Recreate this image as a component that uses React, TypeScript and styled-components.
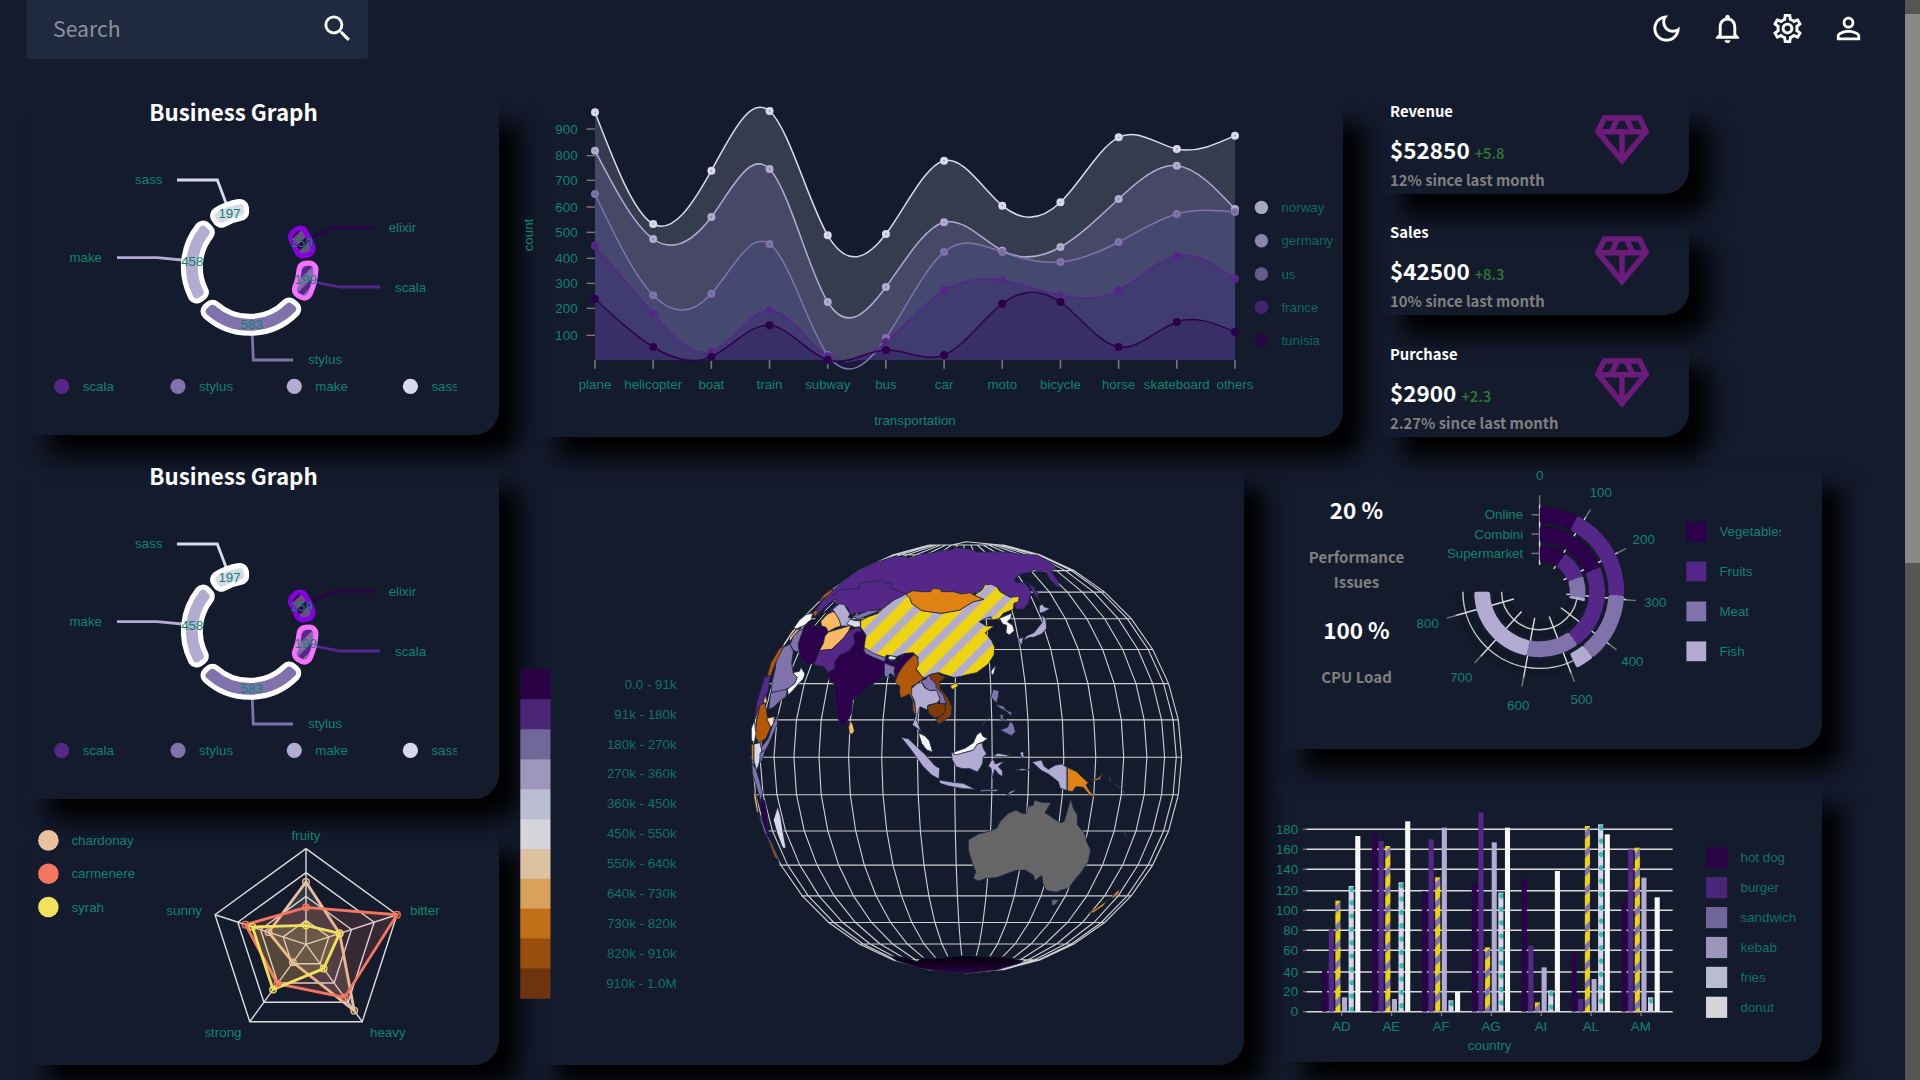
import React from "react";
import styled, { createGlobalStyle } from "styled-components";
import {
  MdSearch,
  MdOutlineDarkMode,
  MdNotificationsNone,
  MdOutlineSettings,
  MdPersonOutline,
  MdOutlineDiamond,
} from "react-icons/md";

const UI_FONT = '"Noto Sans CJK SC", "Noto Sans", sans-serif';
const CHART_FONT = '"Liberation Sans", Arial, sans-serif';
const TEAL = "#0e846d";

const GlobalStyle = createGlobalStyle`
  html, body { margin: 0; padding: 0; background: #141b2d; }
  body { height: 1080px; overflow: hidden; font-family: ${UI_FONT}; color: #fff; }
  *, *::before, *::after { box-sizing: border-box; }
`;

/* ---------- layout ---------- */

const Page = styled.div`
  display: flex;
  width: 1920px;
  height: 1080px;
  overflow: hidden;
  background: #141b2d;
`;
const Content = styled.main`
  width: 1905px;
  height: 1080px;
  overflow: hidden;
`;
const ScrollTrack = styled.div`
  width: 15px;
  height: 1080px;
  padding-top: 14px;
  background: #555;
`;
const ScrollThumb = styled.div`
  height: 549px;
  background: #888;
`;
const TopBar = styled.header`
  display: flex;
  justify-content: space-between;
  height: 103px;
  padding: 0 39px 0 27px;
`;
const SearchBox = styled.div`
  display: flex;
  align-items: center;
  justify-content: space-between;
  width: 341px;
  height: 59px;
  padding: 0 13px 3px 26px;
  border-radius: 0 0 4px 4px;
  background: #1f2a40;
  font-size: 35px;
`;
const SearchText = styled.span`
  font-size: 21.2px;
  line-height: 30px;
  color: #8c919b;
`;
const IconRow = styled.nav`
  display: flex;
  gap: 25.6px;
  height: 57px;
  align-items: center;
  font-size: 35px;
`;
const Board = styled.div`
  display: flex;
  gap: 38px;
  padding-left: 27px;
`;
const Column = styled.div<{ $w: number; $gap: number }>`
  display: flex;
  flex-direction: column;
  width: ${(p) => p.$w}px;
  gap: ${(p) => p.$gap}px;
`;
const Row = styled.div`
  display: flex;
  gap: 38px;
`;
const Card = styled.section<{ $w: number; $h: number }>`
  flex: none;
  display: flex;
  width: ${(p) => p.$w}px;
  height: ${(p) => p.$h}px;
  border-radius: 0 0 25px 0;
  box-shadow: 21px 21px 23px #000;
`;
const PieCard = styled(Card)`
  flex-direction: column;
`;
const PieTitle = styled.h2`
  margin: 0;
  width: 413px;
  height: 22px;
  font-size: 22.3px;
  line-height: 17.6px;
  font-weight: 700;
  text-align: center;
`;
const Chart = styled.svg`
  display: block;
  flex: none;
  overflow: visible;
  font-family: ${CHART_FONT};
  font-size: 13.33px;
`;
const ClippedChart = styled(Chart)`
  overflow: hidden;
`;
const RadialChart = styled(ClippedChart)`
  margin-left: -24px;
`;

/* ---------- stat cards ---------- */

const StatCard = styled(Card)`
  justify-content: space-between;
  padding: 0 34px 0 9px;
`;
const StatBody = styled.div`
  display: flex;
  flex-direction: column;
`;
const StatName = styled.div`
  height: 26px;
  font-size: 14.8px;
  line-height: 16px;
  font-weight: 700;
`;
const StatValue = styled.div`
  display: flex;
  align-items: baseline;
  gap: 5px;
  height: 37px;
  font-size: 22.5px;
  line-height: 41px;
  font-weight: 700;
`;
const StatDelta = styled.span`
  font-size: 14.8px;
  font-weight: 500;
  color: #2e7d32;
`;
const StatNote = styled.div`
  font-size: 14.85px;
  line-height: 28px;
  font-weight: 700;
  color: #808080;
  white-space: nowrap;
`;
const Gem = styled(MdOutlineDiamond)`
  margin-top: 4px;
  font-size: 66px;
  color: #6c1b7b;
`;

/* ---------- performance ---------- */

const PerfList = styled.div`
  flex: none;
  width: 149px;
  padding-top: 28px;
  text-align: center;
  font-weight: 700;
`;
const PerfValue = styled.div`
  height: 49px;
  font-size: 22.5px;
  line-height: 29px;
`;
const PerfLabel = styled.div<{ $h: number }>`
  height: ${(p) => p.$h}px;
  padding: 0 24px;
  font-size: 15px;
  line-height: 25.4px;
  color: #808080;
`;

/* ---------- pie ---------- */

const PX = 249.7;
const PY = 267;
const rad = (d: number) => ((d - 90) * Math.PI) / 180;
const at = (cx: number, cy: number, r: number, d: number) =>
  `${(cx + r * Math.cos(rad(d))).toFixed(2)},${(cy + r * Math.sin(rad(d))).toFixed(2)}`;

/* Ring sector inset by c on every side, so a round-joined stroke gives it soft corners. */
function sector(cx: number, cy: number, ri: number, ro: number, a: number, b: number, c: number) {
  const i = ri + c;
  const o = ro - c;
  const di = (Math.asin(c / i) * 180) / Math.PI;
  const dOut = (Math.asin(c / o) * 180) / Math.PI;
  const large = b - a > 180 ? 1 : 0;
  return `M${at(cx, cy, o, a + dOut)}A${o},${o} 0 ${large} 1 ${at(cx, cy, o, b - dOut)}L${at(cx, cy, i, b - di)}A${i},${i} 0 ${large} 0 ${at(cx, cy, i, a + di)}Z`;
}

const slices = [
  { v: "159", a: 51, b: 78.2, fill: "#2d004b", stroke: "#8400dd", hatch: "#6c4d81", x: 301.7, y: 242 },
  { v: "199", a: 86.4, b: 120.4, fill: "#542788", stroke: "#f671ff", hatch: "#8768ab", x: 305.7, y: 279.2 },
  { v: "583", a: 128.6, b: 228.3, fill: "#8073ac", stroke: "#ffffff", hatch: "", x: 251.7, y: 324.3 },
  { v: "458", a: 236.5, b: 314.8, fill: "#b2abd2", stroke: "#ffffff", hatch: "", x: 192.3, y: 261 },
  { v: "197", a: 323, b: 356.7, fill: "#d8daeb", stroke: "#ffffff", hatch: "", x: 229.5, y: 213.3 },
];
const links = [
  { c: "#2d004b", p: "374,227.7 334.3,227.7 312.3,237.3", t: "elixir", x: 388.7, y: 231.7, end: false },
  { c: "#542788", p: "380,287 340,287 316,282.3", t: "scala", x: 395, y: 291.5, end: false },
  { c: "#8073ac", p: "252.3,335.5 253.3,360 293,360", t: "stylus", x: 308, y: 363.7, end: false },
  { c: "#b2abd2", p: "117,257.7 157.3,257.7 182,260", t: "make", x: 102, y: 261.7, end: true },
  { c: "#d8daeb", p: "177,180 217.3,180 226,203", t: "sass", x: 162.5, y: 184, end: true },
];
const pieLegend = [
  ["#542788", "scala", 61.7],
  ["#8073ac", "stylus", 178],
  ["#b2abd2", "make", 294.3],
  ["#d8daeb", "sass", 410.4],
] as const;

function BusinessPie({ id }: { id: string }) {
  return (
    <PieCard $w={472} $h={332}>
      <PieTitle>Business Graph</PieTitle>
      <ClippedChart width={430} height={290} viewBox="27 125 430 290">
        <defs>
          {slices.filter((s) => s.hatch).map((s) => (
            <pattern key={s.v} id={id + s.v} width="18.86" height="18.86" patternUnits="userSpaceOnUse" patternTransform={s.v === "159" ? "translate(9,0)" : undefined}>
              <rect width="19" height="19" fill={s.fill} />
              <path d="M-18.86,18.86L18.86,-18.86M-18.86,37.72L37.72,-18.86M0,37.72L37.72,0" stroke={s.hatch} strokeWidth="8" />
            </pattern>
          ))}
        </defs>
        {links.map((l) => (
          <g key={l.t}>
            <polyline points={l.p} fill="none" stroke={l.c} strokeWidth="2.8" />
            <text x={l.x} y={l.y} fill={TEAL} textAnchor={l.end ? "end" : "start"}>{l.t}</text>
          </g>
        ))}
        {slices.map((s) => {
          const d = sector(PX, PY, 49.5, 66.2, s.a, s.b, 6.4);
          const paint = s.hatch ? `url(#${id}${s.v})` : s.fill;
          return (
            <g key={s.v} strokeLinejoin="round">
              <path d={d} fill={s.stroke} stroke={s.stroke} strokeWidth="18.1" />
              <path d={d} fill={paint} stroke={paint} strokeWidth="7.8" />
            </g>
          );
        })}
        {slices.map((s) => (
          <text key={s.v} x={s.x} y={s.y + 4.6} fill={TEAL} textAnchor="middle">{s.v}</text>
        ))}
        {pieLegend.map(([c, t, x]) => (
          <g key={t}>
            <circle cx={x} cy="386.3" r="7.6" fill={c} />
            <text x={x + 21} y="390.8" fill={TEAL}>{t}</text>
          </g>
        ))}
      </ClippedChart>
    </PieCard>
  );
}

/* ---------- area chart ---------- */

type Pt = [number, number];

/* Control values of a natural cubic spline along one coordinate. */
function controls(x: number[]): [number[], number[]] {
  const n = x.length - 1;
  const a = new Array<number>(n).fill(1);
  const b = new Array<number>(n).fill(4);
  const r = x.slice(0, n).map((v, i) => 4 * v + 2 * x[i + 1]);
  a[0] = 0;
  b[0] = 2;
  r[0] = x[0] + 2 * x[1];
  a[n - 1] = 2;
  b[n - 1] = 7;
  r[n - 1] = 8 * x[n - 1] + x[n];
  for (let i = 1; i < n; i++) {
    const m = a[i] / b[i - 1];
    b[i] -= m;
    r[i] -= m * r[i - 1];
  }
  a[n - 1] = r[n - 1] / b[n - 1];
  for (let i = n - 2; i >= 0; i--) a[i] = (r[i] - a[i + 1]) / b[i];
  b[n - 1] = (x[n] + a[n - 1]) / 2;
  for (let i = 0; i < n - 1; i++) b[i] = 2 * x[i + 1] - a[i + 1];
  return [a, b];
}

function spline(p: Pt[]) {
  const [xa, xb] = controls(p.map((q) => q[0]));
  const [ya, yb] = controls(p.map((q) => q[1]));
  let d = `M${p[0][0]},${p[0][1]}`;
  for (let i = 1; i < p.length; i++) {
    d += "C" + [xa[i - 1], ya[i - 1], xb[i - 1], yb[i - 1], p[i][0], p[i][1]].map((n) => n.toFixed(2)).join(",");
  }
  return d;
}

const areaSeries = [
  { t: "norway", c: "#d8daeb", f: "#343c4e", y: [157, 492, 332, 153, 526, 522, 302, 437, 427, 232, 267, 227] },
  { t: "germany", c: "#b2abd2", f: "#464866", y: [272, 537, 471, 327, 726, 681, 487, 572, 561, 417, 317, 447] },
  { t: "us", c: "#8073ac", f: "#45486f", y: [402, 706, 701, 552, 885, 834, 576, 576, 606, 546, 462, 456] },
  { t: "france", c: "#542788", f: "#403c72", y: [557, 761, 875, 751, 889, 846, 691, 661, 706, 691, 587, 656] },
  { t: "tunisia", c: "#2d004b", f: "#392f68", y: [717, 861, 890, 796, 900, 870, 885, 731, 726, 861, 786, 816] },
].map((s) => ({ ...s, pts: s.y.map((y, i) => [595 + (640 / 11) * i, 60 + y / 3] as Pt) }));
const vehicles = ["plane", "helicopter", "boat", "train", "subway", "bus", "car", "moto", "bicycle", "horse", "skateboard", "others"];
const countTicks = [207, 287, 361, 441, 517, 595, 670, 745, 826];

function AreaChart() {
  return (
    <Chart width={806} height={334} viewBox="537 103 806 334">
      <clipPath id="aboveAxis"><rect x="590" y="90" width="650" height="270" /></clipPath>
      <clipPath id="belowAxis"><rect x="820" y="360" width="60" height="15" /></clipPath>
      {areaSeries.map((s) => (
        <path key={s.t} d={`${spline(s.pts)}L1235,360L595,360Z`} fill={s.f} clipPath="url(#aboveAxis)" />
      ))}
      <path d={`${spline(areaSeries[2].pts)}L1235,360L595,360Z`} fill="#181a3c" clipPath="url(#belowAxis)" />
      {countTicks.map((y, i) => (
        <g key={y}>
          <path d={`M586.5,${60 + y / 3}H595`} stroke="#777" strokeWidth="1.4" />
          <text x="577.6" y={64.6 + y / 3} textAnchor="end" fill={TEAL}>{900 - i * 100}</text>
        </g>
      ))}
      {vehicles.map((v, i) => (
        <g key={v}>
          <path d={`M${595 + (640 / 11) * i},360v8.8`} stroke="#777" strokeWidth="1.6" />
          <text x={595 + (640 / 11) * i} y="388.8" textAnchor="middle" fill={TEAL}>{v}</text>
        </g>
      ))}
      <text x="915" y="424.7" textAnchor="middle" fill={TEAL}>transportation</text>
      <text transform="translate(533,235) rotate(-90)" textAnchor="middle" fill={TEAL}>count</text>
      {areaSeries.map((s) => (
        <path key={s.t} d={spline(s.pts)} fill="none" stroke={s.c} strokeWidth="1.5" />
      ))}
      {areaSeries.map((s) =>
        s.pts.map((p, i) => (
          <g key={s.t + i}>
            <circle cx={p[0]} cy={p[1]} r="4" fill={s.c} />
            <circle cx={p[0]} cy={p[1]} r=".7" fill="#141b2d" opacity=".5" />
          </g>
        ))
      )}
      {areaSeries.map((s, i) => (
        <g key={s.t} opacity=".75">
          <circle cx="1261.4" cy={207.4 + i * 33.3} r="6.7" fill={s.c} />
          <text x="1281.4" y={212 + i * 33.3} fill={TEAL}>{s.t}</text>
        </g>
      ))}
    </Chart>
  );
}

/* ---------- radar ---------- */

const radarPoint = (r: number, i: number): Pt => [
  306 + (r / 3) * Math.sin((i * 72 * Math.PI) / 180),
  944.3 - (r / 3) * Math.cos((i * 72 * Math.PI) / 180),
];
const ring = (rs: number[]) => rs.map((r, i) => radarPoint(r, i).map((n) => n.toFixed(2)).join(",")).join(" ");
const wines = [
  { t: "chardonay", c: "#e8c1a0", r: [187, 106, 246, 67, 118] },
  { t: "carmenere", c: "#f47560", r: [111, 287, 197, 146, 191] },
  { t: "syrah", c: "#f1e15b", r: [57, 106, 90, 168, 169] },
];
const tastes = [
  ["fruity", 306, 840, "middle"],
  ["bitter", 410, 915, "start"],
  ["heavy", 370, 1037, "start"],
  ["strong", 241.5, 1037, "end"],
  ["sunny", 202, 915, "end"],
] as const;

function Radar() {
  return (
    <Chart width={472} height={234} viewBox="27 831 472 234">
      {[72, 143.5, 215, 287].map((r) => (
        <polygon key={r} points={ring([r, r, r, r, r])} fill="none" stroke="#ddd" strokeWidth="1.4" />
      ))}
      {[0, 1, 2, 3, 4].map((i) => (
        <path key={i} d={`M306,944.3L${radarPoint(287, i)}`} stroke="#ddd" strokeWidth="1.4" />
      ))}
      {wines.map((w) => (
        <polygon key={w.t} points={ring(w.r)} fill={w.c} fillOpacity=".16" stroke={w.c} strokeWidth="2.8" />
      ))}
      {wines.map((w) =>
        w.r.map((r, i) => {
          const [x, y] = radarPoint(r, i);
          return <circle key={w.t + i} cx={x} cy={y} r="3.3" fill={w.c} fillOpacity=".2" stroke={w.c} strokeWidth="1.3" />;
        })
      )}
      {tastes.map(([t, x, y, a]) => (
        <text key={t} x={x} y={y} textAnchor={a} fill={TEAL}>{t}</text>
      ))}
      {wines.map((w, i) => (
        <g key={w.t}>
          <circle cx="48.4" cy={840.4 + i * 33.3} r="10.3" fill={w.c} />
          <text x="71.4" y={845 + i * 33.3} fill={TEAL}>{w.t}</text>
        </g>
      ))}
    </Chart>
  );
}

/* ---------- globe ---------- */

const GX = 966.3;
const GY = 757.3;
const GR = 215.6;
const LON0 = 113.1;
const D = Math.PI / 180;

function graticule() {
  const out: string[] = [];
  for (let lon = 30; lon <= 200; lon += 10) {
    const max = lon % 90 === 0 ? 90 : 80;
    const seg: string[] = [];
    for (let lat = -max; lat <= max; lat += 10) {
      seg.push(`${(GX + GR * Math.cos(lat * D) * Math.sin((lon - LON0) * D)).toFixed(1)},${(GY - GR * Math.sin(lat * D)).toFixed(1)}`);
    }
    out.push("M" + seg.join("L"));
  }
  for (let lat = -80; lat <= 80; lat += 10) {
    const w = GR * Math.cos(lat * D);
    out.push(`M${(GX - w).toFixed(1)},${(GY - GR * Math.sin(lat * D)).toFixed(1)}h${(2 * w).toFixed(1)}`);
  }
  return out.join("");
}

const P1 = "#2d004b";
const P2 = "#542788";
const P3 = "#8073ac";
const P4 = "#b2abd2";
const P5 = "#d8daeb";
const W = "#f7f7f7";
const O1 = "#fee0b6";
const O2 = "#fdb863";
const O3 = "#e08214";
const O4 = "#b35806";
const O5 = "#7f3b08";

/* Country outlines, three units to the pixel, origin at the upper left of the globe. */
const lands: [string, string][] = [
  [P2, "230,288 228,270 240,250 275,214 300,192 340,160 400,130 460,110 500,110 508,117 525,108 545,102 580,98 600,92 640,88 646,82 660,85 690,88 716,97 760,95 810,97 840,103 890,105 920,122 945,138 948,148 934,152 928,150 945,170 953,182 960,205 945,195 925,172 918,152 895,154 880,148 875,157 850,160 836,165 822,180 832,188 852,187 868,205 872,225 865,250 850,268 828,268 822,250 835,242 838,230 810,232 780,215 770,200 755,193 735,195 728,210 700,222 665,222 640,215 605,215 600,207 578,205 572,215 545,215 520,212 497,222 480,232 462,240 440,258 420,268 380,275 345,280 330,285 325,265 310,252 290,258 278,277 250,270 290,240 285,238 250,265 235,285"],
  [P2, "864,188 880,200 890,215 896,222 892,225 900,243 885,225 875,208"],
  [O4, "238,243 252,224 278,206 276,215 262,228 245,240"],
  [O4, "220,278 230,268 232,280 224,292"],
  [W, "162,323 178,300 198,284 218,279 214,298 195,315 168,327"],
  [O2, "148,353 168,330 183,324 165,345 150,364"],
  [P3, "150,374 160,348 180,330 190,328 186,345 175,370 180,398 162,392"],
  [P3, "125,385 150,372 160,395 155,430 160,460 172,472 165,490 145,505 120,515 94,517 95,490 105,450 110,415"],
  [W, "158,458 178,454 183,442 195,462 190,477 175,492 160,510 145,525 142,508 165,490 172,472"],
  [P3, "92,518 142,508 138,530 118,545 100,562 86,568"],
  [O4, "82,468 92,430 118,386 132,378 108,425 92,468"],
  [P2, "74,470 91,468 85,510 70,545 55,570 42,604 50,550"],
  [O2, "70,545 76,525 82,545 74,552"],
  [O4, "60,556 74,548 79,570 84,600 92,622 78,655 56,670 46,648 50,600"],
  [O1, "80,595 103,590 101,612 92,622"],
  [P3, "84,656 98,615 114,582 112,612 88,668 66,712 62,685"],
  [W, "34,625 43,602 48,640 43,668 34,660"],
  [O3, "34,675 42,670 42,722 35,724"],
  [P5, "42,672 60,668 65,690 60,722 50,752 42,725"],
  [P3, "36,728 48,748 58,780 68,820 62,842 50,802 37,762"],
  [P3, "60,700 76,690 66,722 60,728"],
  [O2, "41,810 48,825 56,880 50,875 42,832"],
  [P1, "62,842 74,842 82,885 82,925 101,978 80,945 66,900"],
  [P3, "56,885 66,900 84,950 74,938"],
  [O4, "84,958 96,975 118,1025 104,1010"],
  [P5, "113,860 122,890 128,930 138,985 128,984 112,942 100,900"],
  [P1, "205,306 215,312 240,322 258,318 266,335 255,355 250,375 240,392 228,425 208,435 190,428 180,408 175,378 182,350 192,325"],
  [O2, "240,295 262,283 278,275 288,280 299,302 303,318 285,324 265,335 258,322 245,318"],
  [P4, "278,268 298,252 312,253 330,282 325,292 345,300 327,318 303,318 299,302 287,282"],
  [P3, "335,288 352,285 385,272 425,270 395,282 370,292 355,298"],
  [P5, "320,312 330,298 345,302 360,302 362,320 345,322"],
  [O2, "254,350 265,336 303,325 333,316 325,335 310,355 295,370 275,388 238,392 250,370"],
  [P2, "333,330 355,322 365,332 342,348 346,370 325,395 300,405 285,425 285,445 265,458 252,440 222,434 238,392 275,388 295,370 310,355 325,335"],
  [P1, "340,345 352,334 374,338 377,365 372,385 400,402 434,415 468,430 495,402 518,394 522,406 505,420 492,435 478,455 468,470 462,443 434,430 433,470 405,488 380,503 355,528 338,540 335,578 320,605 305,620 292,592 284,545 283,492 268,482 264,458 285,445 285,425 300,405 325,395 345,370"],
  [P3, "370,385 385,383 410,398 437,408 434,425 400,412 376,400"],
  [P5, "444,412 452,406 470,412 464,420 446,418"],
  [P3, "433,428 450,436 465,440 462,455 465,472 452,460 440,472 433,465"],
  [O2, "330,604 338,612 343,632 338,642 328,641 326,622"],
  ["url(#stripes)", "362,302 385,290 415,280 430,265 462,240 480,232 497,222 510,235 515,250 545,272 605,280 660,270 680,257 700,245 731,238 703,226 726,210 735,194 755,193 770,200 780,215 810,232 838,229 835,245 822,250 820,268 790,280 778,295 758,300 752,290 735,296 718,305 738,318 762,318 736,338 755,362 764,382 762,405 745,432 710,458 680,464 660,470 640,472 610,463 598,458 575,462 550,475 535,455 527,445 534,412 520,398 495,400 470,410 440,405 434,412 400,400 372,382 378,345 362,322"],
  [O3, "497,222 520,212 545,215 572,215 578,205 600,207 605,215 640,215 665,222 690,218 703,226 731,238 700,245 680,257 660,270 605,280 545,272 515,250 510,235"],
  [O4, "522,404 533,410 535,435 528,448 542,466 552,474 530,490 515,500 518,530 526,560 528,592 519,572 517,540 508,522 482,535 478,515 480,500 465,485 475,460 492,435 505,420"],
  [O5, "566,466 590,459 617,472 600,485 600,505 622,532 636,560 633,588 597,613 587,600 612,580 618,552 600,520 578,492"],
  [P3, "543,482 556,478 566,466 575,480 588,492 588,502 610,525 618,550 600,552 598,530 585,510 568,512 555,502"],
  [P4, "515,505 530,492 543,486 555,504 570,512 590,511 600,538 590,550 565,555 562,570 540,560 535,575 530,600 542,630 555,642 532,625 517,615 528,585 524,545 515,525"],
  [O5, "562,558 590,549 616,553 615,576 600,590 583,594 566,580"],
  [W, "535,638 555,648 568,662 578,696 560,690 545,670"],
  ["url(#stripes)", "632,495 650,489 655,497 640,508 633,505"],
  [W, "754,452 767,436 764,450 760,466 753,460"],
  [P4, "483,652 505,656 530,680 555,703 570,720 585,737 599,745 597,777 575,765 550,740 535,720 510,685"],
  [P4, "597,780 640,787 670,790 706,808 670,806 625,798 600,790"],
  [P4, "720,810 745,809 775,808 770,814 745,813 722,814"],
  [P4, "798,826 812,814 832,808 814,820"],
  [P4, "634,695 645,704 675,697 700,690 712,672 726,668 730,685 740,702 730,710 728,730 722,742 712,756 690,746 668,746 648,740 636,718"],
  [W, "642,696 660,690 675,685 700,668 710,645 722,636 730,650 743,655 730,665 712,672 700,690 675,697 650,704 640,702"],
  [P4, "760,706 775,700 803,705 811,699 800,711 770,710"],
  [P4, "753,722 760,718 766,732 793,723 775,740 787,752 788,770 775,762 764,748 758,775 753,745 745,738"],
  [P4, "840,697 850,695 852,710 846,716"],
  [P4, "825,751 845,746 872,749 850,752"],
  [P4, "876,726 905,720 912,738 925,748 945,736 965,732 981,742 981,812 960,804 955,785 925,762 905,752"],
  [O3, "982,742 1010,755 1030,775 1045,788 1038,795 1050,815 1068,830 1050,827 1030,802 1008,800 997,815 982,812"],
  [O3, "1054,778 1075,774 1088,760 1080,778 1066,782"],
  [P3, "760,508 777,512 775,530 770,548 762,542 753,530"],
  [P3, "765,553 790,558 798,570 815,577 814,588 800,575 780,564"],
  [P3, "780,583 790,585 788,595 800,600 795,605 782,598"],
  [P3, "780,630 803,622 810,604 820,612 826,635 815,647 800,640"],
  [W, "778,295 795,288 815,279 813,295 802,305 818,316 823,332 808,345 798,338 800,316 788,312"],
  [P4, "898,258 906,252 912,260 930,266 912,276 898,280"],
  [P4, "905,286 917,295 920,325 905,342 880,352 868,352 850,362 860,347 882,338 898,318 908,305"],
  [P4, "834,357 850,352 846,372 842,374"],
  ["#666", "685,960 715,942 748,934 770,925 782,902 805,880 828,870 845,880 860,880 862,862 880,855 883,840 905,847 933,848 915,878 940,895 960,908 972,905 980,880 992,836 1000,865 1012,885 1012,915 1033,940 1040,965 1052,990 1045,1025 1025,1055 1000,1085 985,1105 965,1110 950,1117 920,1112 910,1095 905,1066 885,1082 880,1065 855,1050 825,1052 790,1065 770,1073 740,1075 715,1083 700,1075 707,1055 697,1030 685,990"],
  ["#666", "935,1138 957,1140 947,1153 936,1158"],
  [O3, "1042,1180 1070,1164 1102,1141 1090,1158 1060,1178"],
  [O3, "1114,1132 1128,1116 1138,1108 1136,1120 1120,1134"],
  ["url(#ice)", "450,1308 500,1312 530,1325 545,1314 600,1314 640,1308 680,1307 760,1310 800,1311 850,1323 838,1330 770,1350 680,1360 600,1354 540,1345 470,1322"],
];
const scale = ["#2b0145", "#4b2678", "#726799", "#9f96bb", "#bbbed0", "#d5d6da", "#dcc2a0", "#d9a25c", "#c17018", "#994e0d", "#6d340f"];
const ranges = ["0.0 - 91k", "91k - 180k", "180k - 270k", "270k - 360k", "360k - 450k", "450k - 550k", "550k - 640k", "640k - 730k", "730k - 820k", "820k - 910k", "910k - 1.0M"];

function Globe() {
  return (
    <Chart width={707} height={598} viewBox="537 467 707 598">
      <defs>
        <pattern id="stripes" width="80" height="80" patternUnits="userSpaceOnUse" patternTransform="translate(35,0)">
          <rect width="80" height="80" fill={P4} />
          <path d="M-80,80L80,-80M-80,160L160,-80M0,160L160,0" stroke="#eed312" strokeWidth="34" />
        </pattern>
        <linearGradient id="ice" x1="0" y1="0" x2="0" y2="1">
          <stop offset="0" stopColor="#08000f" />
          <stop offset=".4" stopColor="#10001c" />
          <stop offset="1" stopColor={P1} />
        </linearGradient>
      </defs>
      <path d={graticule()} fill="none" stroke="#cfd0d1" strokeWidth="1.1" />
      <g transform="translate(740,520) scale(.33333)" stroke="#1a2740" strokeWidth="2.4" strokeLinejoin="round">
        {lands.map(([f, p], i) => (
          <polygon key={i} points={p} fill={f} />
        ))}
        <path d="M275,230L300,210L325,207L360,205L355,190L380,187L425,180L435,190L455,187L455,205L480,215L497,222" fill="none" />
        <path d="M217,320L246,276M236,304L286,248" stroke="#141b2d" strokeWidth="11" />
        <path d="M225,316L256,280M256,272L280,248M132,372L160,330" stroke="#d0d0d0" strokeWidth="3" />
        <path d="M1108,770L1112,786M1125,792L1150,812L1158,830M1152,934L1160,954M726,616L748,590" stroke="#3c5068" fill="none" />
      </g>
      {scale.map((c, i) => (
        <g key={c}>
          <rect x="520.3" y={669.3 + i * 29.95} width="30.2" height="29.95" fill={c} />
          <text x="676.6" y={688.8 + i * 29.87} textAnchor="end" fill={TEAL} opacity=".85">{ranges[i]}</text>
        </g>
      ))}
    </Chart>
  );
}

/* ---------- radial bars ---------- */

const RX = 1539.6;
const RY = 591.7;
const rings = [
  { t: "Online", ro: 84.7, a: [0, 26.5, 92.6, 141, 154] },
  { t: "Combini", ro: 65.4, a: [0, 68, 144.4, 191.5, 270] },
  { t: "Supermarket", ro: 46, a: [0, 34, 70, 97.6, 102] },
];
const foods = [P1, P2, P3, P4];
const foodNames = ["Vegetables", "Fruits", "Meat", "Fish"];

function RadialBars() {
  return (
    <RadialChart width={374} height={281} viewBox="1407 467 374 281">
      {rings.map((r) => (
        <path key={r.t} d={sector(RX, RY, r.ro - 15.8, r.ro, 0, 270, 0)} fill="#111827" />
      ))}
      {rings.map((r) => {
        const m = r.ro - 8;
        return <path key={r.t} d={`M${at(RX, RY, m, 0)}A${m},${m} 0 1 1 ${at(RX, RY, m, 270)}`} fill="none" stroke="#c9cac8" strokeWidth="1.4" />;
      })}
      {[0, 1, 2, 3, 4, 5, 6, 7, 8].map((i) => {
        const a = (i * 100 * 270) / 850;
        const [x, y] = at(RX, RY, 116.3, a).split(",").map(Number);
        return (
          <g key={i}>
            <path d={`M${at(RX, RY, 26.7, a)}L${at(RX, RY, 88, a)}`} stroke="#ddd" strokeWidth="1.4" />
            <path d={`M${at(RX, RY, 86.5, a)}L${at(RX, RY, 96.5, a)}`} stroke="#777" strokeWidth="1.4" />
            <text x={x} y={y + 4.2} textAnchor="middle" fill={TEAL}>{i * 100}</text>
          </g>
        );
      })}
      {rings.map((r) =>
        foods.map((c, i) => {
          const wide = r.a[i + 1] - r.a[i] > 6;
          return (
            <path
              key={r.t + c}
              d={sector(RX, RY, r.ro - 15.8, r.ro, r.a[i], r.a[i + 1], wide ? 2 : 0.5)}
              fill={c}
              stroke={c}
              strokeWidth={wide ? 4 : 1}
              strokeLinejoin="round"
            />
          );
        })
      )}
      {rings.map((r, i) => (
        <g key={r.t}>
          <path d={`M1531.5,${514.8 + i * 19.3}h8`} stroke="#777" strokeWidth="1.4" />
          <text x="1523.2" y={519 + i * 19.6} textAnchor="end" fill={TEAL}>{r.t}</text>
        </g>
      ))}
      {foods.map((c, i) => (
        <g key={c}>
          <rect x="1686.4" y={521.7 + i * 39.9} width="19.8" height="19.8" fill={c} />
          <text x="1719.4" y={536.2 + i * 40} fill={TEAL}>{foodNames[i]}</text>
        </g>
      ))}
    </RadialChart>
  );
}

/* ---------- grouped bars ---------- */

const barFills = [P1, P2, "url(#barStripes)", P4, "url(#barDots)", W];
const countries = [
  ["AD", [572, 448, 362, 652, 318, 168]],
  ["AE", [159, 183, 198, 657, 307, 124]],
  ["AF", [334, 178, 292, 143, 661, 636]],
  ["AG", [308, 98, 502, 187, 338, 143]],
  ["AI", [298, 497, 667, 562, 631, 273]],
  ["AL", [517, 657, 138, 597, 133, 163]],
  ["AM", [363, 208, 203, 293, 652, 352]],
] as [string, number[]][];
const barTicks = [695, 635, 576, 511, 451, 391, 332, 268, 208, 148];
const barLegend = ["hot dog", "burger", "sandwich", "kebab", "fries", "donut"];
const barLegendFill = [P1, P2, P3, P4, P5, W];

function GroupedBars() {
  return (
    <Chart width={540} height={277} viewBox="1282 785 540 277">
      <defs>
        <pattern id="barStripes" width="18.86" height="18.86" patternUnits="userSpaceOnUse">
          <rect width="19" height="19" fill={P3} />
          <path d="M-18.86,18.86L18.86,-18.86M-18.86,37.72L37.72,-18.86M0,37.72L37.72,0" stroke="#eed312" strokeWidth="8" />
        </pattern>
        <pattern id="barDots" width="13.33" height="13.33" patternUnits="userSpaceOnUse">
          <rect width="14" height="14" fill={P5} />
          <circle cx="3.4" cy="3.4" r="2.67" fill="#38bcb2" />
          <circle cx="10" cy="10" r="2.67" fill="#38bcb2" />
        </pattern>
      </defs>
      {barTicks.map((y, i) => (
        <g key={y}>
          <path d={`M1306.5,${780 + y / 3}H1672.7`} stroke="#d9d9d9" strokeWidth="1.5" />
          <path d={`M1303,${780 + y / 3}h4`} stroke="#777" strokeWidth="1.4" />
          <text x="1298.2" y={784.8 + y / 3} textAnchor="end" fill={TEAL}>{i * 20}</text>
        </g>
      ))}
      {countries.map(([name, tops], k) => {
        const cx = 1341.7 + k * 49.9;
        return (
          <g key={name}>
            {tops.map((y, j) => (
              <g key={j} transform={`translate(${cx - 19.6 + j * 6.63},${780 + y / 3})`}>
                <rect width="5.1" height={(695 - y) / 3} fill={barFills[j]} />
              </g>
            ))}
            <path d={`M${cx},1012v4`} stroke="#777" strokeWidth="1.4" />
            <text x={cx - 0.3} y="1030.8" textAnchor="middle" fill={TEAL}>{name}</text>
          </g>
        );
      })}
      <text x="1489.7" y="1049.7" textAnchor="middle" fill={TEAL}>country</text>
      {barLegend.map((t, i) => (
        <g key={t} opacity=".85">
          <rect x="1706" y={847.2 + i * 29.9} width="21.2" height="21.2" fill={barLegendFill[i]} />
          <text x="1740.5" y={862.4 + i * 29.9} fill={TEAL}>{t}</text>
        </g>
      ))}
    </Chart>
  );
}

/* ---------- page ---------- */

const stats = [
  ["Revenue", "$52850", "+5.8", "12% since last month"],
  ["Sales", "$42500", "+8.3", "10% since last month"],
  ["Purchase", "$2900", "+2.3", "2.27% since last month"],
];

export default function App() {
  return (
    <Page>
      <GlobalStyle />
      <Content>
        <TopBar>
          <SearchBox>
            <SearchText>Search</SearchText>
            <MdSearch />
          </SearchBox>
          <IconRow>
            <MdOutlineDarkMode />
            <MdNotificationsNone />
            <MdOutlineSettings />
            <MdPersonOutline />
          </IconRow>
        </TopBar>
        <Board>
          <Column $w={472} $gap={32}>
            <BusinessPie id="hatchA" />
            <BusinessPie id="hatchB" />
            <Card $w={472} $h={234}>
              <Radar />
            </Card>
          </Column>
          <Column $w={1285} $gap={30}>
            <Row>
              <Card $w={806} $h={334}>
                <AreaChart />
              </Card>
              <Column $w={308} $gap={30.8}>
                {stats.map(([name, value, delta, note]) => (
                  <StatCard key={name} $w={308} $h={90.7}>
                    <StatBody>
                      <StatName>{name}</StatName>
                      <StatValue>
                        {value}
                        <StatDelta>{delta}</StatDelta>
                      </StatValue>
                      <StatNote>{note}</StatNote>
                    </StatBody>
                    <Gem />
                  </StatCard>
                ))}
              </Column>
            </Row>
            <Row>
              <Card $w={707} $h={598}>
                <Globe />
              </Card>
              <Column $w={540} $gap={36}>
                <Card $w={540} $h={282}>
                  <PerfList>
                    <PerfValue>20 %</PerfValue>
                    <PerfLabel $h={71}>Performance Issues</PerfLabel>
                    <PerfValue>100 %</PerfValue>
                    <PerfLabel $h={26}>CPU Load</PerfLabel>
                  </PerfList>
                  <RadialBars />
                </Card>
                <Card $w={540} $h={277}>
                  <GroupedBars />
                </Card>
              </Column>
            </Row>
          </Column>
        </Board>
      </Content>
      <ScrollTrack>
        <ScrollThumb />
      </ScrollTrack>
    </Page>
  );
}
